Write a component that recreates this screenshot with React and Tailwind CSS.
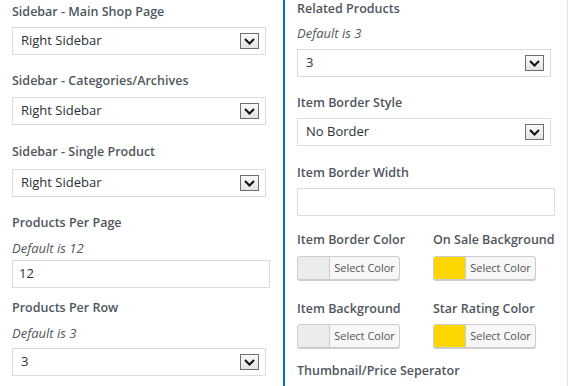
import React from 'react';

const font = { fontFamily: '"Open Sans", "Noto Sans", sans-serif' };

const Arrow = () => (
  <span className="flex h-[16px] w-[19px] items-center justify-center border border-[#707070] bg-gradient-to-b from-[#fafafa] to-[#e3e3e3]">
    <svg width="11" height="7" viewBox="0 0 11 7">
      <polyline points="1,1 5.5,5.5 10,1" fill="none" stroke="#111" strokeWidth="2" />
    </svg>
  </span>
);

const Label = ({ children, className = '' }) => (
  <div className={`whitespace-nowrap text-[12.5px] leading-[20px] font-semibold text-[#4f565d] ${className}`}>{children}</div>
);

const Hint = ({ children, className = '' }) => (
  <div className={`text-[13px] leading-[20px] italic text-[#50575e] ${className}`}>{children}</div>
);

const Select = ({ value, className = '' }) => (
  <div className={`flex h-[28px] items-center justify-between border border-[#dcdcdc] bg-white pl-[8px] pr-[6px] ${className}`}>
    <span className="text-[13px] text-[#2c3136]">{value}</span>
    <Arrow />
  </div>
);

const Input = ({ value = '', className = '' }) => (
  <div className={`flex h-[28px] items-center border border-[#dcdcdc] bg-white pl-[6px] text-[13px] text-[#2c3136] ${className}`}>
    {value}
  </div>
);

const ColorButton = ({ color }) => (
  <div className="flex h-[24px] w-[103px] overflow-hidden rounded-[3px] border border-[#cccccc] bg-[#f7f7f7] shadow-[0_1px_0_#cccccc]">
    <span className="w-[32px] border-r border-[#cccccc]" style={{ backgroundColor: color }} />
    <span className="flex flex-1 items-center justify-center text-[11px] text-[#555]">Select Color</span>
  </div>
);

export default function App() {
  return (
    <div className="flex h-[386px] w-[568px] overflow-hidden bg-white" style={font}>
      <div className="w-[283px] pl-[12px]">
        <Label className="mt-[2px]">Sidebar - Main Shop Page</Label>
        <Select value="Right Sidebar" className="mt-[5px] w-[254px]" />
        <Label className="mt-[16px]">Sidebar - Categories/Archives</Label>
        <Select value="Right Sidebar" className="mt-[6px] w-[254px]" />
        <Label className="mt-[17px]">Sidebar - Single Product</Label>
        <Select value="Right Sidebar" className="mt-[7px] w-[254px]" />
        <Label className="mt-[16px]">Products Per Page</Label>
        <Hint className="mt-[5px]">Default is 12</Hint>
        <Input value="12" className="mt-[2px] w-[258px]" />
        <Label className="mt-[10px]">Products Per Row</Label>
        <Hint className="mt-[5px]">Default is 3</Hint>
        <Select value="3" className="mt-[5px] w-[254px]" />
      </div>
      <div className="w-[2px] bg-[#0073aa]" />
      <div className="flex-1 border-r border-[#e5e5e5] pl-[12px]">
        <Label className="-mt-[1px]">Related Products</Label>
        <Hint className="mt-[4px]">Default is 3</Hint>
        <Select value="3" className="mt-[6px] w-[254px]" />
        <Label className="mt-[16px]">Item Border Style</Label>
        <Select value="No Border" className="mt-[5px] w-[254px]" />
        <Label className="mt-[17px]">Item Border Width</Label>
        <Input className="mt-[5px] w-[258px]" />
        <div className="mt-[14px] flex">
          <div className="w-[136px]">
            <Label>Item Border Color</Label>
            <div className="mt-[6px]"><ColorButton color="#ececec" /></div>
          </div>
          <div>
            <Label>On Sale Background</Label>
            <div className="mt-[6px]"><ColorButton color="#ffd700" /></div>
          </div>
        </div>
        <div className="mt-[19px] flex">
          <div className="w-[136px]">
            <Label>Item Background</Label>
            <div className="mt-[5px]"><ColorButton color="#ececec" /></div>
          </div>
          <div>
            <Label>Star Rating Color</Label>
            <div className="mt-[5px]"><ColorButton color="#ffd700" /></div>
          </div>
        </div>
        <Label className="mt-[13px]">Thumbnail/Price Seperator</Label>
      </div>
    </div>
  );
}
